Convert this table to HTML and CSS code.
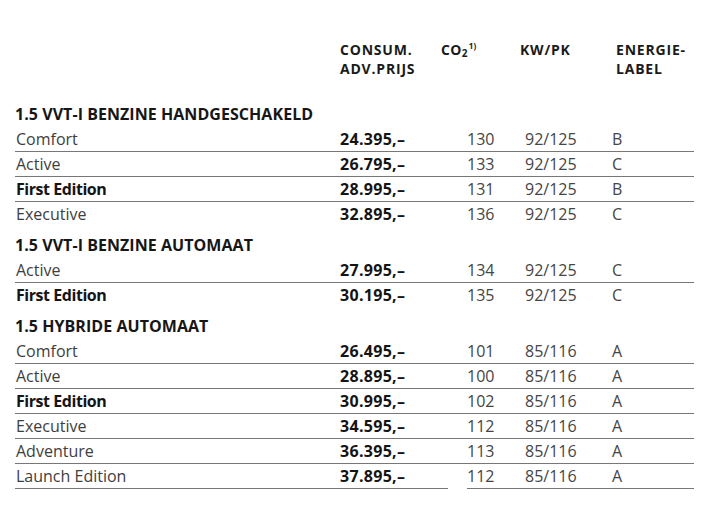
FILE: index.html
```html
<!DOCTYPE html>
<html lang="nl">
<head>
<meta charset="utf-8">
<title>Prijslijst</title>
<link rel="stylesheet" href="styles.css">
</head>
<body>
<div class="page">
  <div class="head">
    <div class="h-name"></div>
    <div class="h-price">CONSUM.<br>ADV.PRIJS</div>
    <div class="h-co2">CO<sub>2</sub><sup>1)</sup></div>
    <div class="h-kw">KW/PK</div>
    <div class="h-label">ENERGIE-<br>LABEL</div>
  </div>

  <section class="group">
    <h2 class="group-title">1.5 VVT-I BENZINE HANDGESCHAKELD</h2>
    <div class="row"><span class="name">Comfort</span><span class="price">24.395,–</span><span class="co2">130</span><span class="kw">92/125</span><span class="label">B</span></div>
    <div class="row"><span class="name">Active</span><span class="price">26.795,–</span><span class="co2">133</span><span class="kw">92/125</span><span class="label">C</span></div>
    <div class="row"><span class="name strong">First Edition</span><span class="price">28.995,–</span><span class="co2">131</span><span class="kw">92/125</span><span class="label">B</span></div>
    <div class="row last"><span class="name">Executive</span><span class="price">32.895,–</span><span class="co2">136</span><span class="kw">92/125</span><span class="label">C</span></div>
  </section>

  <section class="group">
    <h2 class="group-title">1.5 VVT-I BENZINE AUTOMAAT</h2>
    <div class="row"><span class="name">Active</span><span class="price">27.995,–</span><span class="co2">134</span><span class="kw">92/125</span><span class="label">C</span></div>
    <div class="row last"><span class="name strong">First Edition</span><span class="price">30.195,–</span><span class="co2">135</span><span class="kw">92/125</span><span class="label">C</span></div>
  </section>

  <section class="group">
    <h2 class="group-title">1.5 HYBRIDE AUTOMAAT</h2>
    <div class="row"><span class="name">Comfort</span><span class="price">26.495,–</span><span class="co2">101</span><span class="kw">85/116</span><span class="label">A</span></div>
    <div class="row"><span class="name">Active</span><span class="price">28.895,–</span><span class="co2">100</span><span class="kw">85/116</span><span class="label">A</span></div>
    <div class="row"><span class="name strong">First Edition</span><span class="price">30.995,–</span><span class="co2">102</span><span class="kw">85/116</span><span class="label">A</span></div>
    <div class="row"><span class="name">Executive</span><span class="price">34.595,–</span><span class="co2">112</span><span class="kw">85/116</span><span class="label">A</span></div>
    <div class="row"><span class="name">Adventure</span><span class="price">36.395,–</span><span class="co2">113</span><span class="kw">85/116</span><span class="label">A</span></div>
    <div class="row split"><span class="name">Launch Edition</span><span class="price">37.895,–</span><span class="co2">112</span><span class="kw">85/116</span><span class="label">A</span></div>
  </section>
</div>
</body>
</html>
```

FILE: styles.css
```css
html, body {
  margin: 0;
  padding: 0;
  background: #ffffff;
}

body {
  font-family: "Open Sans", "Liberation Sans", sans-serif;
  color: #3c3c3c;
}

.page {
  width: 679px;
  padding: 40px 0 0 15px;
}

.head {
  display: grid;
  grid-template-columns: 325px 101px 79px 96px 1fr;
  font-weight: 700;
  font-size: 14px;
  line-height: 19.2px;
  color: #1a1a1a;
  height: 61.5px;
  letter-spacing: 0.8px;
}

.h-co2 {
  letter-spacing: 0.3px;
}

.h-co2 sub {
  font-size: 10px;
  vertical-align: -2px;
  line-height: 0;
}

.h-co2 sup {
  font-size: 8px;
  vertical-align: 6px;
  line-height: 0;
  margin-left: 1px;
}

.group + .group {
  margin-top: 6px;
}

.group-title {
  margin: 0;
  height: 25px;
  font-size: 16px;
  font-weight: 700;
  line-height: 25px;
  color: #161616;
  letter-spacing: 0.05px;
  white-space: nowrap;
}

.row {
  display: grid;
  grid-template-columns: 325px 127px 58px 87px 1fr;
  height: 25px;
  box-sizing: border-box;
  border-bottom: 1.5px solid #777777;
  font-size: 16px;
  line-height: 24px;
}

.row.last {
  border-bottom: none;
}

.row.split {
  border-bottom: none;
}

.row.split > span {
  border-bottom: 1.5px solid #777777;
}

.row.split .price {
  margin-right: 19px;
}

.name {
  padding-left: 1px;
  color: #3e3e3e;
}

.name.strong {
  font-weight: 700;
  color: #151515;
  letter-spacing: -0.45px;
}

.price {
  font-weight: 700;
  color: #141414;
  font-size: 16px;
  letter-spacing: 0.3px;
}

.co2, .kw, .label {
  color: #454545;
}
```
